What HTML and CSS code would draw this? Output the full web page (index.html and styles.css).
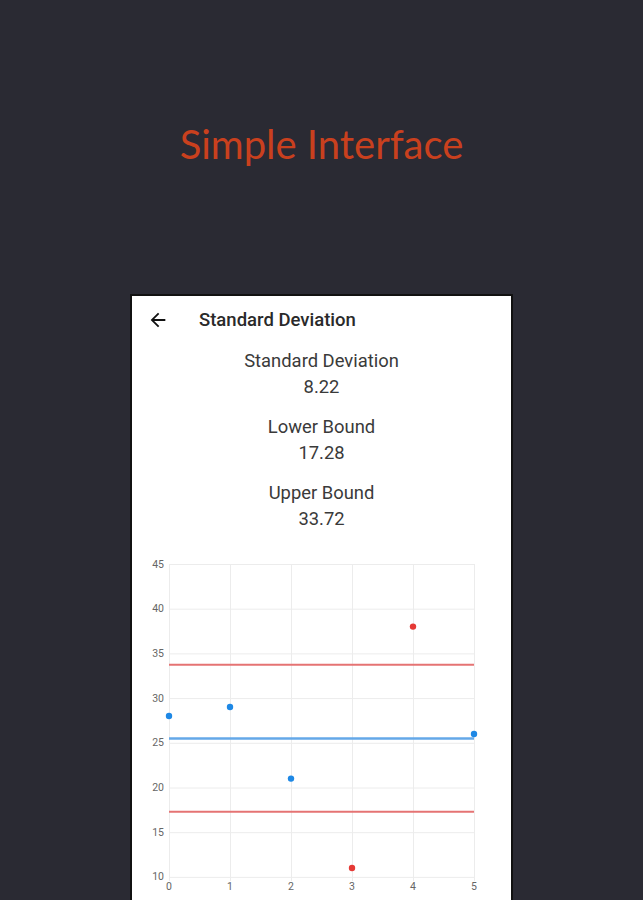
FILE: index.html
```html
<!DOCTYPE html>
<html>
<head>
<meta charset="utf-8">
<link rel="stylesheet" href="styles.css">
</head>
<body>
<div class="hero">
  <h1 class="hero-title">Simple Interface</h1>
</div>
<div class="phone">
  <div class="appbar">
    <svg class="back" width="24" height="24" viewBox="0 0 24 24"><path d="M20 11H7.83l5.59-5.59L12 4l-8 8 8 8 1.41-1.41L7.83 13H20v-2z" fill="#111"/></svg>
    <div class="appbar-title">Standard Deviation</div>
  </div>
  <div class="stats">
    <div class="stat"><div class="stat-label">Standard Deviation</div><div class="stat-value">8.22</div></div>
    <div class="stat"><div class="stat-label">Lower Bound</div><div class="stat-value">17.28</div></div>
    <div class="stat"><div class="stat-label">Upper Bound</div><div class="stat-value">33.72</div></div>
  </div>
  <svg class="chart" width="379" height="360" viewBox="0 0 379 360">
    <g class="grid" stroke="#ececec" stroke-width="1">
      <line x1="37" y1="19.5" x2="342" y2="19.5"/>
      <line x1="37" y1="64.2" x2="342" y2="64.2"/>
      <line x1="37" y1="108.9" x2="342" y2="108.9"/>
      <line x1="37" y1="153.6" x2="342" y2="153.6"/>
      <line x1="37" y1="198.3" x2="342" y2="198.3"/>
      <line x1="37" y1="243" x2="342" y2="243"/>
      <line x1="37" y1="287.7" x2="342" y2="287.7"/>
      <line x1="37" y1="332.4" x2="342" y2="332.4"/>
      <line x1="37.5" y1="19" x2="37.5" y2="336"/>
      <line x1="98.5" y1="19" x2="98.5" y2="336"/>
      <line x1="159.5" y1="19" x2="159.5" y2="336"/>
      <line x1="220.5" y1="19" x2="220.5" y2="336"/>
      <line x1="281.5" y1="19" x2="281.5" y2="336"/>
      <line x1="342.5" y1="19" x2="342.5" y2="336"/>
    </g>
    <g class="ylabels" font-family="Roboto, sans-serif" font-size="10.5" fill="#666" text-anchor="end">
      <text x="32" y="22.5">45</text>
      <text x="32" y="67.2">40</text>
      <text x="32" y="111.9">35</text>
      <text x="32" y="156.6">30</text>
      <text x="32" y="201.3">25</text>
      <text x="32" y="246">20</text>
      <text x="32" y="290.7">15</text>
      <text x="32" y="335.4">10</text>
    </g>
    <g class="xlabels" font-family="Roboto, sans-serif" font-size="10.5" fill="#666" text-anchor="middle">
      <text x="37" y="345">0</text>
      <text x="98" y="345">1</text>
      <text x="159" y="345">2</text>
      <text x="220" y="345">3</text>
      <text x="281" y="345">4</text>
      <text x="342" y="345">5</text>
    </g>
    <line x1="37" y1="119.8" x2="342" y2="119.8" stroke="#e57373" stroke-width="2"/>
    <line x1="37" y1="266.8" x2="342" y2="266.8" stroke="#e57373" stroke-width="2"/>
    <line x1="37" y1="193.6" x2="342" y2="193.6" stroke="#64a8e8" stroke-width="2.5"/>
    <g fill="#1e88e5">
      <circle cx="37" cy="171" r="3.2"/>
      <circle cx="98" cy="162" r="3.2"/>
      <circle cx="159" cy="233.6" r="3.2"/>
      <circle cx="342" cy="189" r="3.2"/>
    </g>
    <g fill="#e53935">
      <circle cx="220" cy="323" r="3.2"/>
      <circle cx="281" cy="81.6" r="3.2"/>
    </g>
  </svg>
</div>
</body>
</html>
```
FILE: styles.css
```css
html, body {
  margin: 0;
  padding: 0;
}
body {
  background: #2a2a33;
  width: 643px;
  height: 900px;
  overflow: hidden;
}
.hero {
  height: 294px;
  display: flex;
  justify-content: center;
}
.hero-title {
  margin: 120px 0 0 0;
  font-family: Lato, "Open Sans", sans-serif;
  font-weight: 400;
  font-size: 40px;
  line-height: 48px;
  color: #c9401e;
}
.phone {
  width: 379px;
  margin: 0 auto;
  background: #fff;
  border: 2px solid #111;
  border-bottom: none;
  height: 640px;
}
.appbar {
  height: 48px;
  display: flex;
  align-items: center;
  padding-left: 15px;
}
.back {
  width: 22px;
  height: 22px;
  display: block;
}
.appbar-title {
  margin-left: 30px;
  font-family: Roboto, sans-serif;
  font-weight: 500;
  font-size: 18.5px;
  color: #2a2a2a;
}
.stats {
  margin-top: 4px;
  display: flex;
  flex-direction: column;
  gap: 14px;
  align-items: center;
  font-family: Roboto, sans-serif;
  font-size: 18.4px;
  color: #3a3a3a;
  text-align: center;
}
.stat-label, .stat-value {
  line-height: 26px;
}
.chart {
  display: block;
  margin-top: 13px;
}
```
